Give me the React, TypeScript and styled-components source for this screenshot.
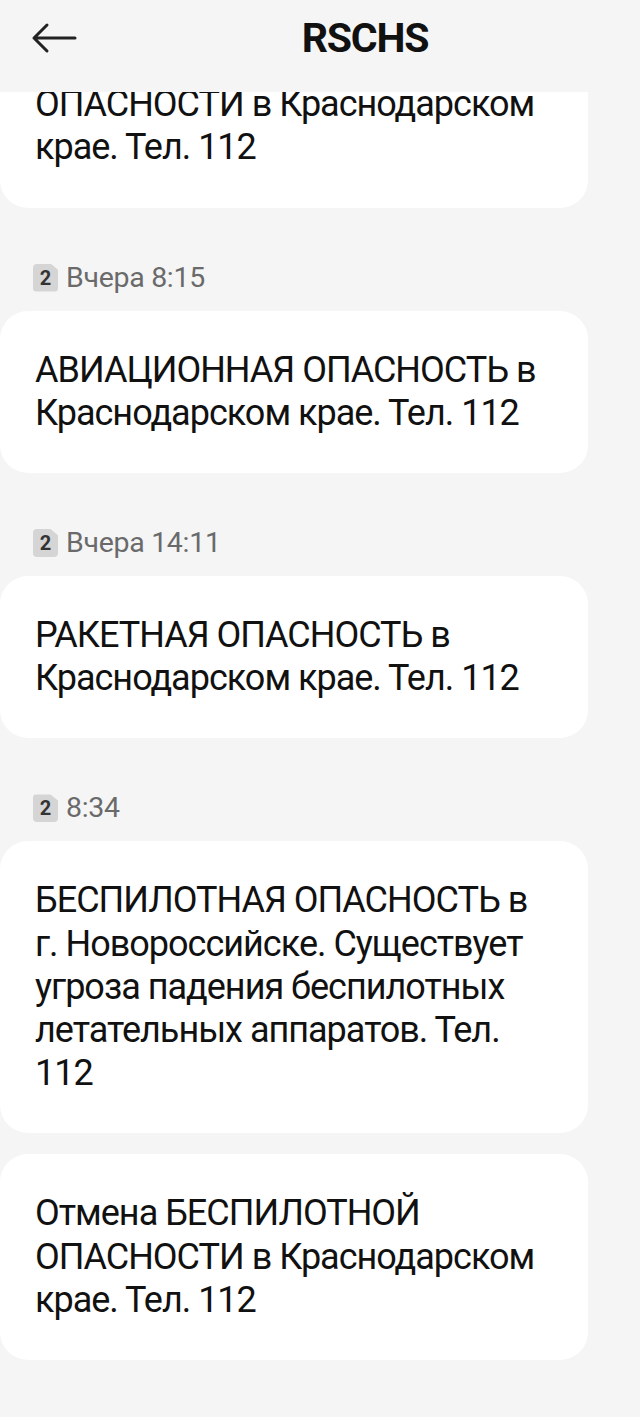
import styled, { createGlobalStyle } from 'styled-components'

const GlobalStyle = createGlobalStyle`
  html, body {
    margin: 0;
    padding: 0;
    background: #f5f5f5;
  }
  body {
    font-family: Roboto, "Noto Sans", sans-serif;
    color: #111;
  }
`

type Item =
  | { kind: 'stamp'; sim: number; time: string }
  | { kind: 'msg'; text: string }

const items: Item[] = [
  { kind: 'msg', text: 'Отмена БЕСПИЛОТНОЙ ОПАСНОСТИ в Краснодарском крае. Тел. 112' },
  { kind: 'stamp', sim: 2, time: 'Вчера 8:15' },
  { kind: 'msg', text: 'АВИАЦИОННАЯ ОПАСНОСТЬ в Краснодарском крае. Тел. 112' },
  { kind: 'stamp', sim: 2, time: 'Вчера 14:11' },
  { kind: 'msg', text: 'РАКЕТНАЯ ОПАСНОСТЬ в Краснодарском крае. Тел. 112' },
  { kind: 'stamp', sim: 2, time: '8:34' },
  {
    kind: 'msg',
    text: 'БЕСПИЛОТНАЯ ОПАСНОСТЬ в г. Новороссийске. Существует угроза падения беспилотных летательных аппаратов. Тел. 112',
  },
  { kind: 'msg', text: 'Отмена БЕСПИЛОТНОЙ ОПАСНОСТИ в Краснодарском крае. Тел. 112' },
]

const BackArrow = () => (
  <svg width="46" height="32" viewBox="0 0 46 32" fill="none">
    <path
      d="M44 16H3M16 3L3 16l13 13"
      stroke="#222"
      strokeWidth="3"
      strokeLinecap="round"
      strokeLinejoin="round"
    />
  </svg>
)

const App = () => {
  return (
    <S_Screen>
      <GlobalStyle />
      <S_Header>
        <S_Back aria-label="Назад">
          <BackArrow />
        </S_Back>
        <S_Title>RSCHS</S_Title>
      </S_Header>
      <S_Viewport>
        <S_List>
          {items.map((it, i) =>
            it.kind === 'stamp' ? (
              <S_Stamp key={i}>
                <S_Sim>{it.sim}</S_Sim>
                <span>{it.time}</span>
              </S_Stamp>
            ) : (
              <S_Bubble key={i}>{it.text}</S_Bubble>
            )
          )}
        </S_List>
      </S_Viewport>
    </S_Screen>
  )
}

export default App

const S_Screen = styled.div`
  width: 640px;
  height: 1417px;
  display: flex;
  flex-direction: column;
  background: #f5f5f5;
  overflow: hidden;
`

const S_Header = styled.header`
  height: 92px;
  flex-shrink: 0;
  display: flex;
  align-items: flex-start;
  padding-top: 13px;
  box-sizing: border-box;
  position: relative;
  z-index: 1;
  background: #f5f5f5;
`

const S_Back = styled.button`
  width: 90px;
  height: 50px;
  padding: 0 0 0 31px;
  border: 0;
  background: none;
  display: flex;
  align-items: center;
`

const S_Title = styled.h1`
  flex: 1;
  margin: 0;
  text-align: center;
  font-size: 41px;
  line-height: 50px;
  letter-spacing: -1.2px;
  font-weight: 700;
  color: #111;
`

const S_Viewport = styled.div`
  flex: 1;
  overflow: hidden;
`

// the thread is scrolled: the first message sits partly under the header
const S_List = styled.div`
  display: flex;
  flex-direction: column;
  margin-top: -90px;
`

const S_Bubble = styled.div`
  width: 588px;
  box-sizing: border-box;
  padding: 38px 35px;
  background: #fff;
  border-radius: 28px;
  font-size: 36px;
  line-height: 43.2px;
  letter-spacing: -1px;
  color: #111;

  & + & {
    margin-top: 21px;
  }
`

const S_Stamp = styled.div`
  display: flex;
  align-items: center;
  gap: 8px;
  margin: 53px 0 16px;
  padding-left: 33px;
  font-size: 28.5px;
  line-height: 34px;
  letter-spacing: -0.3px;
  color: #6a6a6a;
`

const S_Sim = styled.span`
  width: 25px;
  height: 28px;
  flex-shrink: 0;
  display: flex;
  align-items: center;
  justify-content: center;
  background: #d5d5d5;
  border-radius: 4px;
  clip-path: polygon(0 0, 70% 0, 100% 22%, 100% 100%, 0 100%);
  font-size: 20px;
  font-weight: 700;
  letter-spacing: 0;
  color: #333;
`
